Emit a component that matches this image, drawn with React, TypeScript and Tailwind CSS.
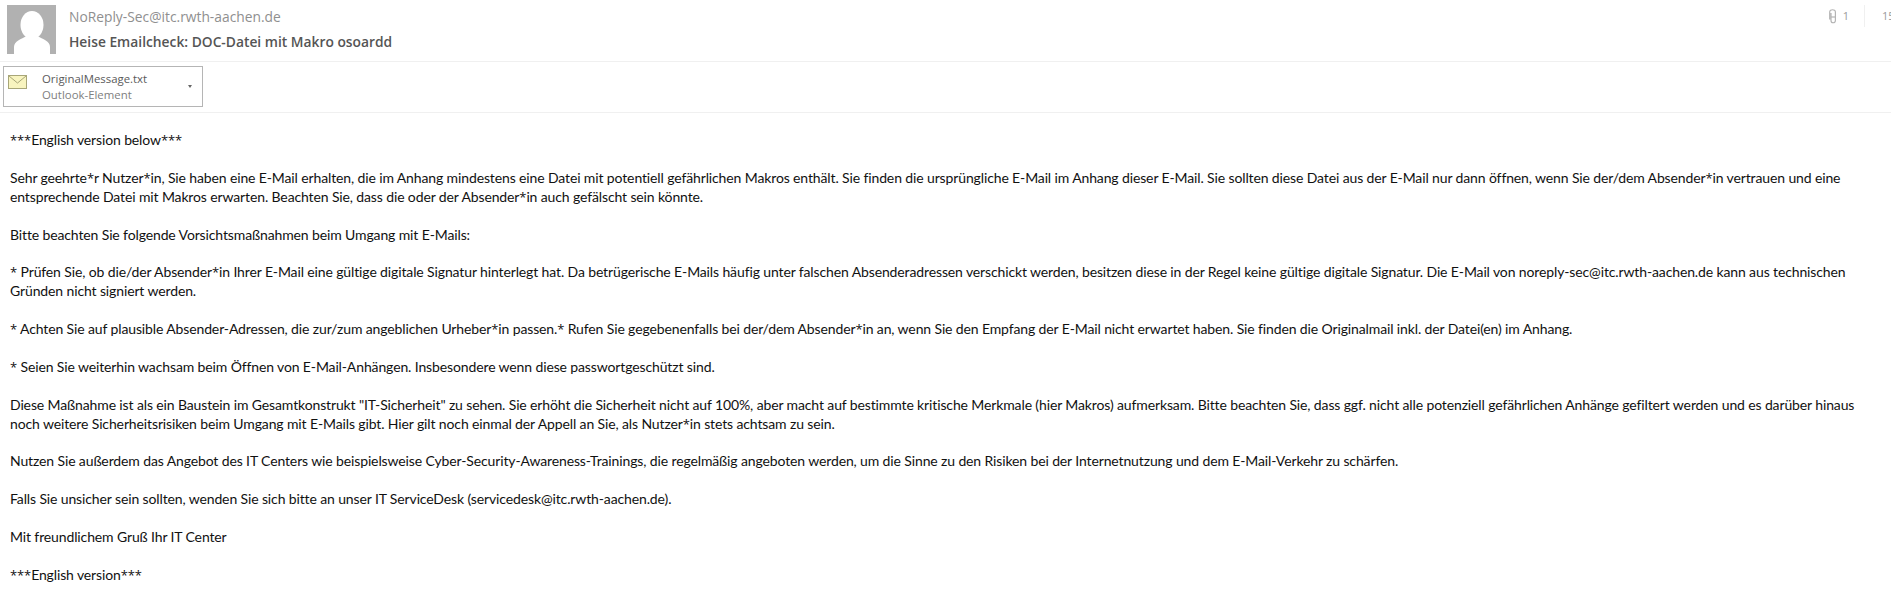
import React from "react";

const paragraphs: string[][] = [
  ["***English version below***"],
  [
    "Sehr geehrte*r Nutzer*in, Sie haben eine E-Mail erhalten, die im Anhang mindestens eine Datei mit potentiell gefährlichen Makros enthält. Sie finden die ursprüngliche E-Mail im Anhang dieser E-Mail. Sie sollten diese Datei aus der E-Mail nur dann öffnen, wenn Sie der/dem Absender*in vertrauen und eine",
    "entsprechende Datei mit Makros erwarten. Beachten Sie, dass die oder der Absender*in auch gefälscht sein könnte.",
  ],
  ["Bitte beachten Sie folgende Vorsichtsmaßnahmen beim Umgang mit E-Mails:"],
  [
    "* Prüfen Sie, ob die/der Absender*in Ihrer E-Mail eine gültige digitale Signatur hinterlegt hat. Da betrügerische E-Mails häufig unter falschen Absenderadressen verschickt werden, besitzen diese in der Regel keine gültige digitale Signatur. Die E-Mail von noreply-sec@itc.rwth-aachen.de kann aus technischen",
    "Gründen nicht signiert werden.",
  ],
  [
    "* Achten Sie auf plausible Absender-Adressen, die zur/zum angeblichen Urheber*in passen.* Rufen Sie gegebenenfalls bei der/dem Absender*in an, wenn Sie den Empfang der E-Mail nicht erwartet haben. Sie finden die Originalmail inkl. der Datei(en) im Anhang.",
  ],
  ["* Seien Sie weiterhin wachsam beim Öffnen von E-Mail-Anhängen. Insbesondere wenn diese passwortgeschützt sind."],
  [
    "Diese Maßnahme ist als ein Baustein im Gesamtkonstrukt \"IT-Sicherheit\" zu sehen. Sie erhöht die Sicherheit nicht auf 100%, aber macht auf bestimmte kritische Merkmale (hier Makros) aufmerksam. Bitte beachten Sie, dass ggf. nicht alle potenziell gefährlichen Anhänge gefiltert werden und es darüber hinaus",
    "noch weitere Sicherheitsrisiken beim Umgang mit E-Mails gibt. Hier gilt noch einmal der Appell an Sie, als Nutzer*in stets achtsam zu sein.",
  ],
  [
    "Nutzen Sie außerdem das Angebot des IT Centers wie beispielsweise Cyber-Security-Awareness-Trainings, die regelmäßig angeboten werden, um die Sinne zu den Risiken bei der Internetnutzung und dem E-Mail-Verkehr zu schärfen.",
  ],
  ["Falls Sie unsicher sein sollten, wenden Sie sich bitte an unser IT ServiceDesk (servicedesk@itc.rwth-aachen.de)."],
  ["Mit freundlichem Gruß Ihr IT Center"],
  ["***English version***"],
];

// the asterisks are wider in the original font than in Lato
const withStars = (line: string) =>
  line.split(/(\*)/).map((part, i) =>
    part === "*" ? (
      <span key={i} className="font-['Open_Sans',sans-serif] text-[13px]">
        *
      </span>
    ) : (
      part
    )
  );

const Avatar = () => (
  <svg width="49" height="49" viewBox="0 0 49 49" className="shrink-0">
    <rect width="49" height="49" fill="#b1b1b1" />
    <ellipse cx="25" cy="20" rx="11.5" ry="14" fill="#fff" />
    <path d="M7 49 V42 C7 36 14 34 20 31 H30 C36 34 43 36 43 42 V49 Z" fill="#fff" />
  </svg>
);

const EnvelopeIcon = () => (
  <svg width="19" height="14" viewBox="0 0 19 14" className="mb-[10px] shrink-0">
    <rect x="0.5" y="0.5" width="18" height="13" fill="#f8f4bf" stroke="#a8a678" />
    <path d="M1 1 L9.5 8 L18 1" fill="none" stroke="#a8a678" />
  </svg>
);

const PaperclipIcon = () => (
  <svg width="7" height="15" viewBox="0 0 7 15" fill="none" stroke="#b4b4b4" strokeWidth="1.2" className="shrink-0">
    <path d="M2 4 V11.5 C2 14.5 6.4 14.5 6.4 11.5 V3 C6.4 0 0.7 0 0.7 3 V10.5" />
    <path d="M2 8 H6.4" />
  </svg>
);

export default function App() {
  return (
    <div className="h-[607px] w-[1891px] overflow-hidden bg-white">
      <header className="flex h-[62px] items-start justify-between border-b border-[#f0f0f0] pl-[7px] pt-[5px]">
        <div className="flex gap-[13px]">
          <Avatar />
          <div className="font-['Open_Sans',sans-serif]">
            <div className="mt-[2px] text-[13.8px] leading-[20px] text-[#8f8f8f]">NoReply-Sec@itc.rwth-aachen.de</div>
            <div className="mt-[5px] text-[13.8px] font-semibold leading-[20px] text-[#555]">
              Heise Emailcheck: DOC-Datei mit Makro osoardd
            </div>
          </div>
        </div>
        <div className="flex items-center font-['Open_Sans',sans-serif] text-[11px] text-[#9a9a9a]">
          <PaperclipIcon />
          <span className="ml-[7px] mt-[1px]">1</span>
          <div className="ml-[15px] h-[22px] w-px bg-[#f0f0f0]" />
          <span className="ml-[17px] mt-[1px] w-[9px] overflow-hidden">15</span>
        </div>
      </header>

      <div className="h-[51px] border-b border-[#f0f0f0] pl-[3px] pt-[4px]">
        <div className="flex h-[41px] w-[200px] items-center border border-[#b5b5b5] pl-[4px] pr-[10px]">
          <EnvelopeIcon />
          <div className="ml-[15px] flex-1 pt-[1px] font-['Open_Sans',sans-serif] text-[11.4px] leading-[16px]">
            <div className="text-[#5a5a5a]">OriginalMessage.txt</div>
            <div className="text-[#808080]">Outlook-Element</div>
          </div>
          <div className="h-0 w-0 border-x-[2.5px] border-t-[3px] border-x-transparent border-t-[#666]" />
        </div>
      </div>

      <main className="flex flex-col gap-[18.9px] whitespace-nowrap pl-[10px] pt-[18px] font-['Lato',sans-serif] text-[14px] leading-[18.9px] tracking-[-0.125px] text-[#111]">
        {paragraphs.map((lines, i) => (
          <p key={i}>
            {lines.map((line, j) => (
              <span key={j} className="block">
                {withStars(line)}
              </span>
            ))}
          </p>
        ))}
      </main>
    </div>
  );
}
